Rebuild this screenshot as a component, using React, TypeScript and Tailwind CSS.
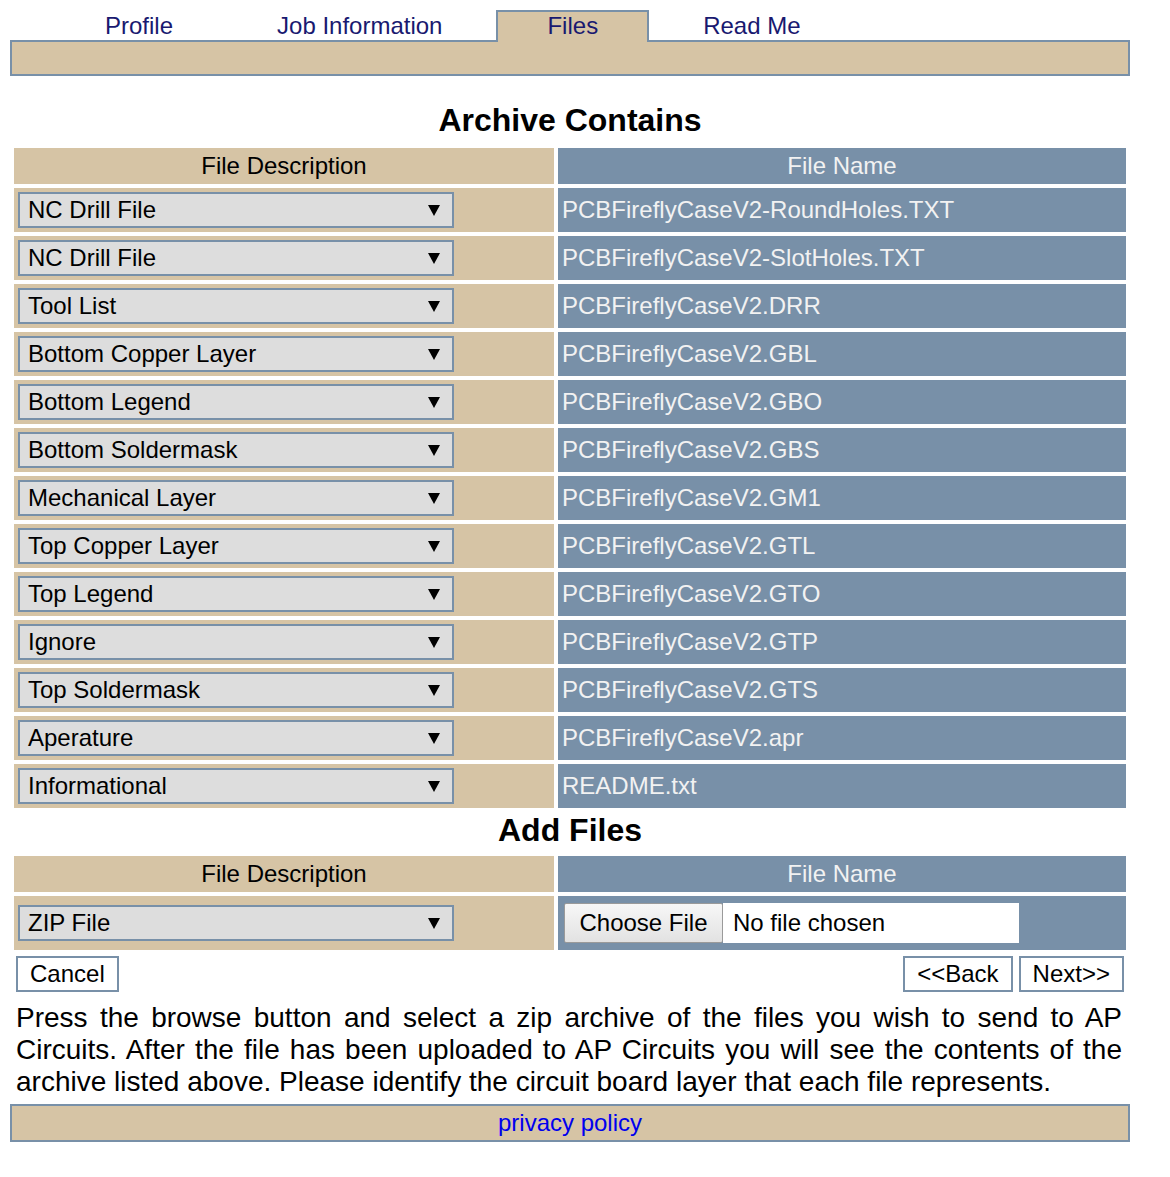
const tabs = ["Profile", "Job Information", "Files", "Read Me"];

const archive = [
  ["NC Drill File", "PCBFireflyCaseV2-RoundHoles.TXT"],
  ["NC Drill File", "PCBFireflyCaseV2-SlotHoles.TXT"],
  ["Tool List", "PCBFireflyCaseV2.DRR"],
  ["Bottom Copper Layer", "PCBFireflyCaseV2.GBL"],
  ["Bottom Legend", "PCBFireflyCaseV2.GBO"],
  ["Bottom Soldermask", "PCBFireflyCaseV2.GBS"],
  ["Mechanical Layer", "PCBFireflyCaseV2.GM1"],
  ["Top Copper Layer", "PCBFireflyCaseV2.GTL"],
  ["Top Legend", "PCBFireflyCaseV2.GTO"],
  ["Ignore", "PCBFireflyCaseV2.GTP"],
  ["Top Soldermask", "PCBFireflyCaseV2.GTS"],
  ["Aperature", "PCBFireflyCaseV2.apr"],
  ["Informational", "README.txt"],
];

// looks like a native <select> box
function LayerSelect({ value }: { value: string }) {
  return (
    <button
      type="button"
      className="flex h-[36px] w-[436px] items-center justify-between border-2 border-[#7890a8] bg-[#dddddd] pl-[8px] pr-[12px] text-left text-black"
    >
      <span className="leading-[28px]">{value}</span>
      <svg width="12" height="11" viewBox="0 0 12 11">
        <polygon points="0,0 12,0 6,11" fill="#000" />
      </svg>
    </button>
  );
}

function HeaderRow() {
  return (
    <>
      <div className="h-[36px] bg-[#d6c4a5] flex items-center justify-center text-black">
        File Description
      </div>
      <div className="h-[36px] bg-[#7890a8] flex items-center justify-center text-[#f2f2f2]">
        File Name
      </div>
    </>
  );
}

export default function App() {
  return (
    <div className="w-[1140px] min-h-[1177px] bg-white px-[10px] pt-[10px] text-[24px] text-black font-['Liberation_Sans',Arial,sans-serif]">
      {/* --- Tabs --- */}
      <div className="flex h-[30px] items-start gap-[3px] pl-[43px]">
        {tabs.map((t) =>
          t === "Files" ? (
            <div
              key={t}
              className="relative z-10 h-[32px] border-2 border-b-0 border-[#7890a8] bg-[#d6c4a5] px-[49px] leading-[28px] text-[#191970]"
            >
              {t}
            </div>
          ) : (
            <a
              key={t}
              href="#"
              className={
                t === "Profile"
                  ? "h-[30px] border-2 border-b-0 border-transparent pl-[50px] pr-[48px] leading-[28px] text-[#191970]"
                  : "h-[30px] border-2 border-b-0 border-transparent px-[49px] leading-[28px] text-[#191970]"
              }
            >
              {t}
            </a>
          )
        )}
      </div>
      <div className="h-[36px] border-2 border-[#7890a8] bg-[#d6c4a5]"></div>

      {/* --- Archive Contains --- */}
      <div className="pt-[26px] pb-[5px] text-center text-[32px] font-bold leading-[37px]">
        Archive Contains
      </div>
      <div className="grid grid-cols-[540px_568px] gap-[4px] p-[4px]">
        <HeaderRow />
        {archive.map(([desc, name], i) => (
          <div key={i} className="contents">
            <div className="h-[44px] bg-[#d6c4a5] flex items-center pl-[4px]">
              <LayerSelect value={desc} />
            </div>
            <div className="h-[44px] bg-[#7890a8] flex items-center pl-[4px] text-[#f2f2f2]">
              {name}
            </div>
          </div>
        ))}
      </div>

      {/* --- Add Files --- */}
      <div className="h-[40px] text-center text-[32px] font-bold leading-[37px]">
        Add Files
      </div>
      <div className="grid grid-cols-[540px_568px] gap-[4px] p-[4px]">
        <HeaderRow />
        <div className="h-[54px] bg-[#d6c4a5] flex items-center pl-[4px]">
          <LayerSelect value="ZIP File" />
        </div>
        <div className="h-[54px] bg-[#7890a8] flex items-center pl-[6px]">
          <label className="flex h-[40px] items-stretch cursor-pointer">
            <input type="file" className="hidden" />
            <span className="flex w-[159px] items-center justify-center rounded-[2px] border border-[#9a9a9a] bg-gradient-to-b from-[#f7f7f7] to-[#e2e2e2] text-black">
              Choose File
            </span>
            <span className="flex w-[296px] items-center bg-white pl-[10px] text-black">
              No file chosen
            </span>
          </label>
        </div>
      </div>

      {/* --- Buttons --- */}
      <div className="mt-[2px] flex justify-between px-[6px]">
        <button className="h-[36px] border-2 border-[#7890a8] bg-white px-[12px] leading-[28px]">
          Cancel
        </button>
        <div className="flex gap-[6px]">
          <button className="h-[36px] border-2 border-[#7890a8] bg-white px-[12px] leading-[28px]">
            &lt;&lt;Back
          </button>
          <button className="h-[36px] border-2 border-[#7890a8] bg-white px-[12px] leading-[28px]">
            Next&gt;&gt;
          </button>
        </div>
      </div>

      <p className="mt-[10px] pl-[6px] pr-[8px] text-justify text-[28px] leading-[32px]">
        Press the browse button and select a zip archive of the files you wish
        to send to AP Circuits. After the file has been uploaded to AP Circuits
        you will see the contents of the archive listed above. Please identify
        the circuit board layer that each file represents.
      </p>

      {/* --- Footer --- */}
      <div className="mt-[6px] flex h-[38px] items-center justify-center border-2 border-[#7890a8] bg-[#d6c4a5]">
        <a href="#" className="text-[#0000ee]">
          privacy policy
        </a>
      </div>
    </div>
  );
}
